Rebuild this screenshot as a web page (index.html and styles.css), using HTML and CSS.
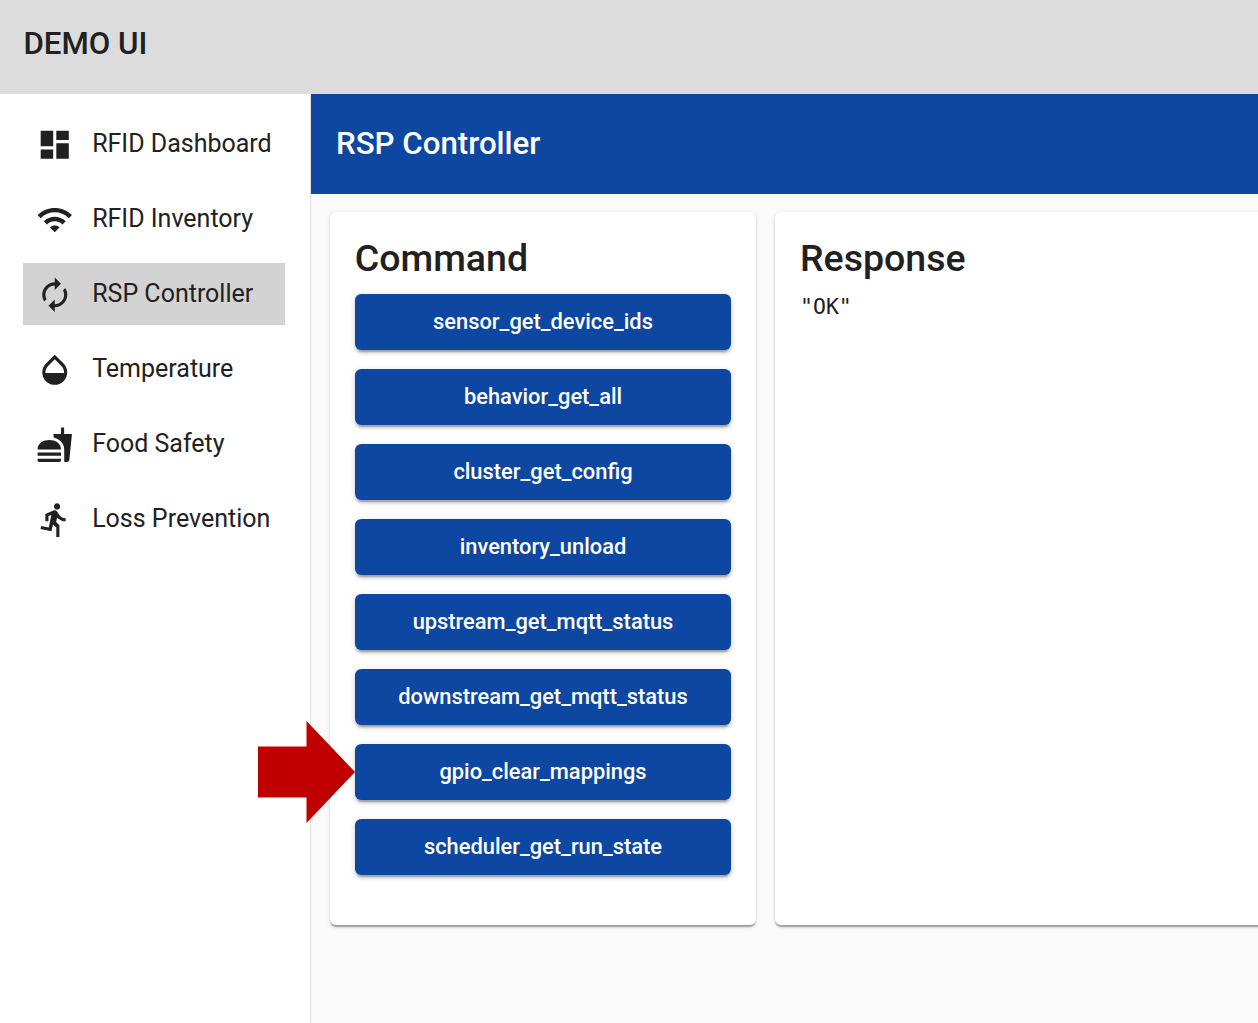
FILE: index.html
```html
<!DOCTYPE html>
<html lang="en">
<head>
<meta charset="utf-8">
<title>Demo UI</title>
<link rel="stylesheet" href="styles.css">
</head>
<body>
<header class="topbar">DEMO UI</header>
<div class="shell">
  <nav class="sidebar">
    <a class="nav-item"><svg class="icon" viewBox="0 0 24 24"><path d="M3 13h8V3H3v10zm0 8h8v-6H3v6zm10 0h8V11h-8v10zm0-18v6h8V3h-8z"/></svg><span>RFID Dashboard</span></a>
    <a class="nav-item"><svg class="icon" viewBox="0 0 24 24"><path d="M1 9l2 2c4.97-4.97 13.03-4.97 18 0l2-2C16.93 2.93 7.08 2.93 1 9zm8 8l3 3 3-3c-1.65-1.66-4.34-1.66-6 0zm-4-4l2 2c2.76-2.76 7.24-2.76 10 0l2-2C15.14 9.14 8.87 9.14 5 13z"/></svg><span>RFID Inventory</span></a>
    <a class="nav-item selected"><svg class="icon" viewBox="0 0 24 24"><path d="M12 6v3l4-4-4-4v3c-4.42 0-8 3.58-8 8 0 1.57.46 3.03 1.24 4.26L6.7 14.8c-.45-.83-.7-1.79-.7-2.8 0-3.31 2.69-6 6-6zm6.76 1.74L17.3 9.2c.44.84.7 1.79.7 2.8 0 3.31-2.69 6-6 6v-3l-4 4 4 4v-3c4.42 0 8-3.58 8-8 0-1.57-.46-3.03-1.24-4.26z"/></svg><span>RSP Controller</span></a>
    <a class="nav-item"><svg class="icon" viewBox="0 0 24 24"><path d="M17.66 8L12 2.35 6.34 8C4.78 9.56 4 11.64 4 13.64s.78 4.11 2.34 5.67 3.61 2.35 5.66 2.35 4.1-.79 5.66-2.35S20 15.64 20 13.64 19.22 9.56 17.66 8zM6 14c.01-2 .62-3.27 1.76-4.4L12 5.27l4.24 4.38C17.38 10.77 17.99 12 18 14H6z"/></svg><span>Temperature</span></a>
    <a class="nav-item"><svg class="icon" viewBox="0 0 24 24"><path d="M18.06 22.99h1.66c.84 0 1.53-.64 1.63-1.46L23 5.05h-5V1h-1.97v4.05h-4.97l.3 2.34c1.71.47 3.31 1.32 4.27 2.26 1.44 1.42 2.43 2.89 2.43 5.29v8.05zM1 21.99V21h15.03v.99c0 .55-.45 1-1.01 1H2.01c-.56 0-1.01-.45-1.01-1zm15.03-7c0-8-15.03-8-15.03 0h15.03zM1.02 17h15v2h-15z"/></svg><span>Food Safety</span></a>
    <a class="nav-item"><svg class="icon" viewBox="0 0 24 24"><path d="M13.49 5.48c1.1 0 2-.9 2-2s-.9-2-2-2-2 .9-2 2 .9 2 2 2zm-3.6 13.9l1-4.4 2.1 2v6h2v-7.5l-2.1-2 .6-3c1.3 1.5 3.3 2.5 5.5 2.5v-2c-1.900 0-3.500-1-4.300-2.400l-1-1.600c-.4-.6-1-1-1.700-1-.3 0-.5.1-.8.1l-5.200 2.200v4.700h2v-3.400l1.800-.7-1.600 8.100-4.900-1-.4 2 7 1.400z"/></svg><span>Loss Prevention</span></a>
  </nav>
  <main class="content">
    <div class="toolbar">RSP Controller</div>
    <div class="cards">
      <section class="card command">
        <h2>Command</h2>
        <div class="buttons">
          <button>sensor_get_device_ids</button>
          <button>behavior_get_all</button>
          <button>cluster_get_config</button>
          <button>inventory_unload</button>
          <button>upstream_get_mqtt_status</button>
          <button>downstream_get_mqtt_status</button>
          <button class="target">gpio_clear_mappings<svg class="arrow" viewBox="0 0 97 102"><path d="M0 25.500H48.500V0L97 51 48.500 102V76.500H0z"/></svg></button>
          <button>scheduler_get_run_state</button>
        </div>
      </section>
      <section class="card response">
        <h2>Response</h2>
        <pre>"OK"</pre>
      </section>
    </div>
  </main>
</div>
</body>
</html>
```
FILE: styles.css
```css
* { box-sizing: border-box; }
body {
  margin: 0;
  height: 1023px;
  overflow: hidden;
  display: flex;
  flex-direction: column;
  font-family: Roboto, sans-serif;
  color: #212121;
  background: #fafafa;
}
.topbar {
  flex: 0 0 93.75px;
  padding: 0 23.4px 6px;
  display: flex;
  align-items: center;
  font-size: 31.25px;
  font-weight: 500;
  background: #dcdcdc;
}
.shell { flex: 1; display: flex; min-height: 0; }
.sidebar {
  flex: 0 0 311px;
  padding: 18.75px 25.5px 0 23.4px;
  border-right: 1.5px solid #e0e0e0;
  background: #fff;
  display: flex;
  flex-direction: column;
  gap: 12.5px;
}
.nav-item {
  height: 62.5px;
  padding-left: 12.5px;
  display: flex;
  align-items: center;
  gap: 18.75px;
  font-size: 25px;
  white-space: nowrap;
}
.nav-item span { padding-bottom: 1.5px; }
.selected { background: #d3d3d3; }
.icon { width: 37.5px; height: 37.5px; margin-top: 1.6px; fill: #212121; flex: none; }
.content { flex: 1; min-width: 0; }
.toolbar {
  height: 99.75px;
  padding-left: 25px;
  display: flex;
  align-items: center;
  font-size: 31.25px;
  font-weight: 500;
  color: #fff;
  background: #0d47a1;
}
.cards { display: flex; gap: 18.75px; padding: 18.75px 0 0 18.75px; }
.card {
  height: 712.5px;
  padding: 25px;
  border-radius: 6.25px;
  background: #fff;
  box-shadow: 0 3px 1.5px -1.5px rgba(0,0,0,.2), 0 1.5px 1.5px rgba(0,0,0,.14), 0 1.5px 4.7px rgba(0,0,0,.12);
}
.command { flex: 0 0 426.5px; }
.response { flex: 0 0 520px; }
h2 { margin: 0; height: 56.25px; font-size: 37.5px; font-weight: 500; line-height: 42px; }
.buttons { display: flex; flex-direction: column; gap: 18.75px; }
button {
  height: 56.25px;
  padding: 0;
  border: 0;
  border-radius: 6.25px;
  font: 500 21.875px Roboto, sans-serif;
  color: #fff;
  background: #0d47a1;
  box-shadow: 0 4.7px 1.5px -3px rgba(0,0,0,.2), 0 3px 3px rgba(0,0,0,.14), 0 1.5px 7.8px rgba(0,0,0,.12);
}
.target { position: relative; }
.arrow { position: absolute; right: 100%; top: -23px; width: 97px; height: 102px; fill: #c00000; }
pre { margin: 0; font: 21.5px/26px "DejaVu Sans Mono", monospace; }
```
